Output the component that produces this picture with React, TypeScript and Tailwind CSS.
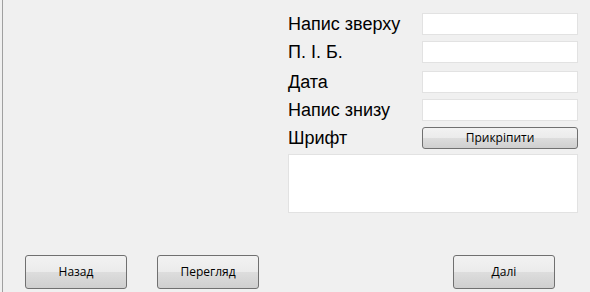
const fields = [
  { label: 'Напис зверху', mt: 'mt-[13px]' },
  { label: 'П. І. Б.', mt: 'mt-[6px]' },
  { label: 'Дата', mt: 'mt-[8px]' },
  { label: 'Напис знизу', mt: 'mt-[6px]' },
]

function WinButton({ children, className }: { children: React.ReactNode; className?: string }) {
  return (
    <button
      className={
        'flex items-center justify-center rounded-[3px] border border-[#707070] bg-[linear-gradient(to_bottom,#f2f2f2_0%,#ebebeb_50%,#dddddd_51%,#cfcfcf_100%)] text-[12px] text-black font-["Open_Sans",sans-serif] ' +
        (className ?? '')
      }
    >
      {children}
    </button>
  )
}

export default function App() {
  return (
    <div className="w-[590px] h-[292px] bg-[#f0f0f0] overflow-hidden font-['Liberation_Sans',Arial,sans-serif]">
      <div className="ml-[2px] h-full border-l border-[#a0a0a0] flex flex-col">
        {/* Form */}
        <div className="ml-[285px] w-[290px] flex flex-col">
          {fields.map((f) => (
            <div key={f.label} className={'flex items-center justify-between ' + f.mt}>
              <span className="text-[18px] leading-none text-black">{f.label}</span>
              <input className="w-[156px] h-[22px] bg-white border border-[#e2e2e2] outline-none" />
            </div>
          ))}
          <div className="flex items-center justify-between mt-[6px]">
            <span className="text-[18px] leading-none text-black">Шрифт</span>
            <WinButton className="w-[156px] h-[22px] text-[11px]">Прикріпити</WinButton>
          </div>
          <textarea className="mt-[5px] w-[290px] h-[59px] bg-white border border-[#e2e2e2] resize-none outline-none" />
        </div>

        {/* Footer buttons */}
        <div className="mt-auto mb-[3px] flex">
          <WinButton className="ml-[22px] w-[102px] h-[34px]">Назад</WinButton>
          <WinButton className="ml-[30px] w-[102px] h-[34px]">Перегляд</WinButton>
          <WinButton className="ml-[194px] w-[102px] h-[34px]">Далі</WinButton>
        </div>
      </div>
    </div>
  )
}
